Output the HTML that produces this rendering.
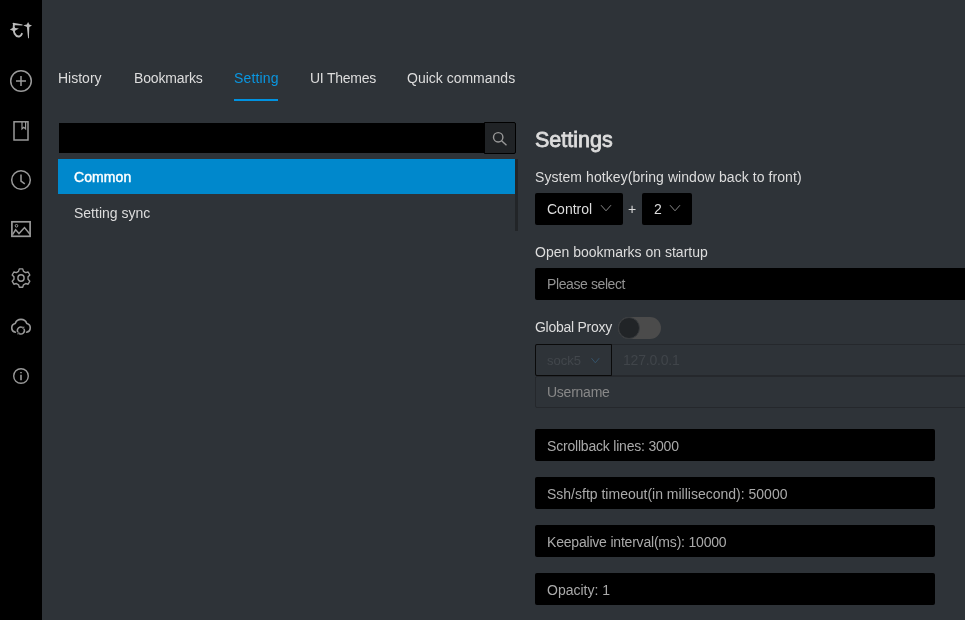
<!DOCTYPE html>
<html><head><meta charset="utf-8">
<style>
*{box-sizing:border-box;margin:0;padding:0}
html,body{-webkit-font-smoothing:antialiased;width:965px;height:620px;overflow:hidden;background:#2e3338;font-family:"Liberation Sans",sans-serif;font-size:14px;color:#ddd;position:relative}
.sb{position:absolute;left:0;top:0;width:42px;height:620px;background:#000}
.sb svg{position:absolute;left:0;top:0}
.t{position:absolute;will-change:transform;white-space:nowrap;line-height:16px;font-size:14px}
.tab{top:70px;color:#ddd}
.tab.act{color:#0a96e0}
.ink{position:absolute;left:234px;top:99px;width:44px;height:2px;background:#0092e0}
.search{position:absolute;left:58px;top:122px;width:427px;height:32px;background:#000;border:1px solid #2e3338;border-right:0}
.sbtn{position:absolute;left:484px;top:122px;width:32px;height:32px;background:#202326;border:1px solid #000;border-radius:0 2px 2px 0}
.blue{position:absolute;left:58px;top:159px;width:457px;height:35px;background:#0088cc}
.scr{position:absolute;left:515px;top:159px;width:3px;height:72px;background:#222528}
.box{position:absolute;background:#000;border-radius:2px}
.chev{position:absolute}
</style></head><body>
<div class="sb">
<svg width="42" height="400" viewBox="0 0 42 400" fill="none" stroke="#999" stroke-width="1.5">
 <!-- logo -->
 <g fill="#bbb" stroke="none">
  <path d="M12.4 23.2 Q13 22.6 14.5 22.9 Q19 23.4 22.6 24.6 L22.4 25.5 Q18 25 13.6 25.2 Z"/>
  <path d="M9.8 29.5 L12.6 28.1 L13.9 26.4 L15.3 27.9 L18.9 28.4 L15.4 30.5 L14.3 32.3 L12.8 30.7 Z"/>
  <path d="M23.3 25.3 L26.8 24.5 L28.1 21.9 L29.3 24.5 L32 25.6 L29.3 26.9 L28.9 38.2 L28.1 38.2 L26.9 26.9 Z"/>
 </g>
 <path d="M13.9 24.3 Q13.2 30.5 14.7 33.8 Q16.6 37.2 19.6 36.4 Q21.2 35.8 21.9 33.8" stroke="#bbb" stroke-width="1.9" stroke-linecap="round"/>
 <!-- plus circle -->
 <circle cx="21" cy="81" r="10.3"/>
 <path d="M16 81H26M21 76V86"/>
 <!-- book -->
 <rect x="14" y="121.8" width="14" height="18.2"/>
 <path d="M22 122v6.8l1.8-1.6 1.8 1.6V122" stroke-width="1.2"/>
 <!-- clock -->
 <circle cx="21" cy="180" r="9.3"/>
 <path d="M21 174.5V181L24.8 183.8"/>
 <!-- image -->
 <rect x="11.9" y="221.8" width="18.2" height="14.5" stroke-width="1.7"/>
 <circle cx="16.5" cy="225.8" r="1.3" stroke-width="1"/>
 <path d="M12.5 234.6L15.6 229.8L19 233.6L24.5 227.6L30 234.2" />
 <!-- gear -->
 <g transform="translate(21 278) scale(0.95 0.97) translate(-21 -278)" stroke-width="1.45">
<path d="M19.2 268.6h3.6l0.8 2.6 2.3 1.3 2.6-0.7 1.8 3.1-1.9 1.9v2.6l1.9 1.9-1.8 3.1-2.6-0.7-2.3 1.3-0.8 2.6h-3.6l-0.8-2.6-2.3-1.3-2.6 0.7-1.8-3.1 1.9-1.9v-2.6l-1.9-1.9 1.8-3.1 2.6 0.7 2.3-1.3z" stroke-linejoin="round"/>
 <circle cx="21" cy="278" r="3.3"/>
 </g>
 <!-- cloud sync -->
 <path d="M15.4 332.2 A4.5 4.5 0 0 1 15.2 323.41 A6.2 6.2 0 0 1 26.8 323.41 A4.5 4.5 0 0 1 26.6 332.2" stroke-linecap="round" stroke-width="1.6"/>
 <path d="M22.65 327.47 A3.5 3.5 0 0 0 17.87 332.25 M19.15 333.53 A3.5 3.5 0 0 0 23.93 328.75" stroke-width="1.5"/>
 <path d="M23.9 326.6 L23.6 328.2 L22 327.9 M17.9 334.4 L18.2 332.8 L19.8 333.1" stroke-width="1"/>
 <!-- info -->
 <circle cx="21" cy="376" r="7.3" stroke-width="1.4"/>
 <path d="M21 374.8V380.3" stroke-width="1.6"/>
 <path d="M21 372V373.2" stroke-width="1.6"/>
</svg>
</div>

<div class="t tab" style="left:58px">History</div>
<div class="t tab" style="left:134px;letter-spacing:-0.15px">Bookmarks</div>
<div class="t tab act" style="left:234px;letter-spacing:0.15px">Setting</div>
<div class="t tab" style="left:310px;letter-spacing:-0.25px">UI Themes</div>
<div class="t tab" style="left:407px">Quick commands</div>
<div class="ink"></div>

<div class="search"></div>
<div class="sbtn"><svg width="30" height="30" viewBox="0 0 30 30" fill="none" stroke="#999" stroke-width="1.4"><circle cx="13.2" cy="14.3" r="4.7"/><path d="M16.6 17.8L21.5 22.2"/></svg></div>
<div class="blue"></div>
<div class="t" style="left:74px;top:169px;color:#fff;-webkit-text-stroke:0.45px #fff;letter-spacing:0.1px">Common</div>
<div class="t" style="left:74px;top:205px;color:#ddd">Setting sync</div>
<div class="scr"></div>

<div class="t" style="left:535px;top:128px;font-size:21.5px;line-height:25px;-webkit-text-stroke:0.8px #ddd;letter-spacing:0px;color:#ddd">Settings</div>
<div class="t" style="left:535px;top:169px;letter-spacing:0.07px">System hotkey(bring window back to front)</div>
<div class="box" style="left:535px;top:193px;width:88px;height:32px"></div>
<div class="t" style="left:547px;top:201px;color:#ddd">Control</div>
<svg class="chev" style="left:600px;top:204px" width="12" height="8" viewBox="0 0 12 8" fill="none" stroke="#888" stroke-width="1"><path d="M1 1.2L6 6.8L11 1.2"/></svg>
<div class="t" style="left:628px;top:201px">+</div>
<div class="box" style="left:642px;top:193px;width:50px;height:32px"></div>
<div class="t" style="left:654px;top:201px;color:#ddd">2</div>
<svg class="chev" style="left:669px;top:204px" width="12" height="8" viewBox="0 0 12 8" fill="none" stroke="#888" stroke-width="1"><path d="M1 1.2L6 6.8L11 1.2"/></svg>

<div class="t" style="left:535px;top:244px">Open bookmarks on startup</div>
<div class="box" style="left:535px;top:268px;width:440px;height:32px"></div>
<div class="t" style="left:547px;top:276px;color:#939393;letter-spacing:-0.4px">Please select</div>

<div class="t" style="left:535px;top:319px;letter-spacing:-0.27px">Global Proxy</div>
<div style="position:absolute;left:618px;top:317px;width:43px;height:22px;border-radius:11px;background:#4b4b4b"></div>
<div style="position:absolute;left:618px;top:317px;width:22px;height:22px;border-radius:11px;background:#212427;border:1.5px solid #393c3f"></div>

<div style="position:absolute;left:535px;top:344px;width:440px;height:32px;border-top:1px solid #25282c;border-bottom:1px solid #25282c"></div>
<div style="position:absolute;left:535px;top:344px;width:77px;height:32px;border:1px solid #0a0a0a;border-radius:2px 0 0 2px"></div>
<div class="t" style="left:547px;top:353px;font-size:13px;color:#42474c">sock5</div>
<svg class="chev" style="left:590px;top:357px" width="11" height="8" viewBox="0 0 11 8" fill="none" stroke="#35536a" stroke-width="1"><path d="M1.5 1.2L5.3 5.8L9.2 1.2"/></svg>
<div class="t" style="left:623px;top:352px;color:#40454a;letter-spacing:-0.2px">127.0.0.1</div>
<div style="position:absolute;left:535px;top:376px;width:440px;height:32px;border:1px solid #25282c;border-radius:2px"></div>
<div class="t" style="left:547px;top:384px;color:#888;letter-spacing:-0.25px">Username</div>

<div class="box" style="left:535px;top:429px;width:400px;height:32px"></div>
<div class="t" style="left:547px;top:438px;color:#aaa;letter-spacing:-0.2px">Scrollback lines: 3000</div>
<div class="box" style="left:535px;top:477px;width:400px;height:32px"></div>
<div class="t" style="left:547px;top:486px;color:#aaa">Ssh/sftp timeout(in millisecond): 50000</div>
<div class="box" style="left:535px;top:525px;width:400px;height:32px"></div>
<div class="t" style="left:547px;top:534px;color:#aaa;letter-spacing:-0.2px">Keepalive interval(ms): 10000</div>
<div class="box" style="left:535px;top:573px;width:400px;height:32px"></div>
<div class="t" style="left:547px;top:582px;color:#aaa">Opacity: 1</div>
</body></html>
